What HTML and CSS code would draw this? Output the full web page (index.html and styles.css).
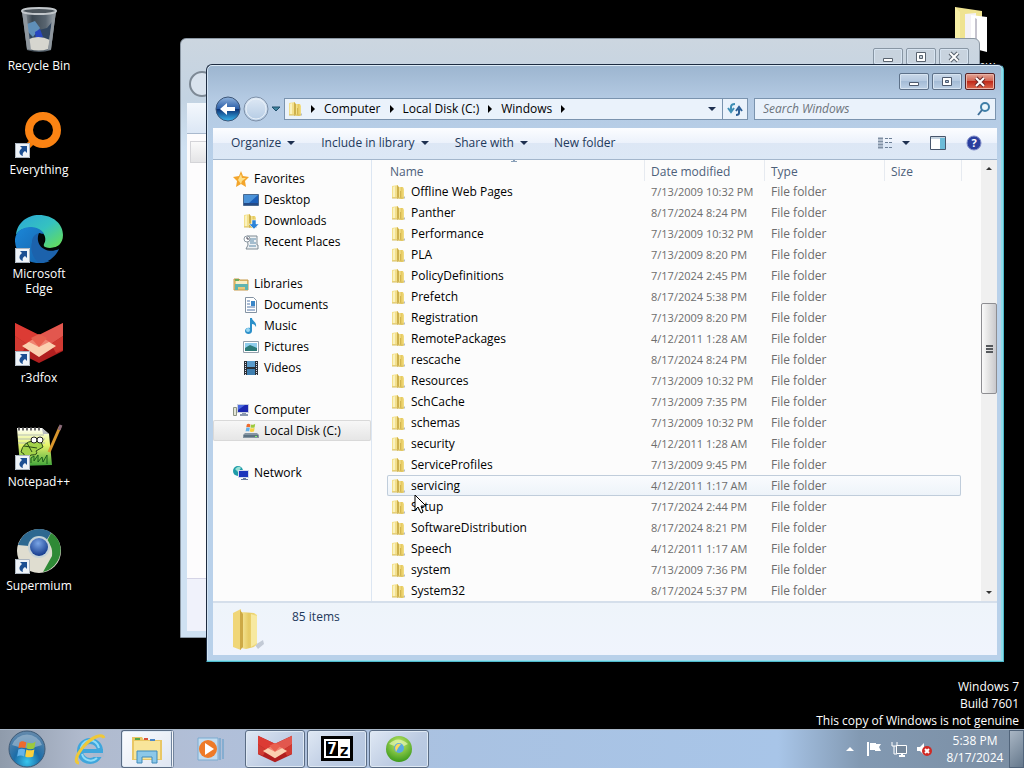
FILE: index.html
```html
<!DOCTYPE html>
<html lang="en">
<head>
  <meta charset="UTF-8">
  <meta name="viewport" content="width=device-width, initial-scale=1.0">
  <title>Desktop</title>
  <link rel="stylesheet" href="styles.css">
</head>
<body>
  <!-- shared icons and gradients -->
  <svg class="defs" aria-hidden="true">
    <defs>
      <linearGradient id="gFolder" x1="0" x2="1"><stop offset="0" stop-color="#f6e79a"/><stop offset=".5" stop-color="#e6ca62"/><stop offset="1" stop-color="#f3df86"/></linearGradient>
      <linearGradient id="gBack" x1="0" x2="0" y1="0" y2="1"><stop offset="0" stop-color="#8fb2dc"/><stop offset=".48" stop-color="#2c5fa8"/><stop offset=".52" stop-color="#0c3478"/><stop offset="1" stop-color="#38b6ee"/></linearGradient>
      <linearGradient id="gFwd" x1="0" x2="0" y1="0" y2="1"><stop offset="0" stop-color="#dfe9f5"/><stop offset="1" stop-color="#b4cbe4"/></linearGradient>
      <linearGradient id="gEdgeTop" x1="0" x2="1" y1="0" y2="1"><stop offset="0" stop-color="#2ba6d8"/><stop offset=".5" stop-color="#35c2c0"/><stop offset="1" stop-color="#6be04e"/></linearGradient>
      <linearGradient id="gEdgeLow" x1="0" x2="1" y1="0" y2="1"><stop offset="0" stop-color="#1b87d8"/><stop offset="1" stop-color="#1560a8"/></linearGradient>
      <linearGradient id="gBin" x1="0" x2="1"><stop offset="0" stop-color="#9aa3ab"/><stop offset=".3" stop-color="#3c4852"/><stop offset=".7" stop-color="#596570"/><stop offset="1" stop-color="#a5adb4"/></linearGradient>
      <radialGradient id="gOrb" cx=".5" cy=".85" r=".8"><stop offset="0" stop-color="#38c6ee"/><stop offset=".45" stop-color="#1c6da8"/><stop offset="1" stop-color="#5f87ab"/></radialGradient>
      <radialGradient id="gBall" cx=".45" cy=".3" r=".7"><stop offset="0" stop-color="#7aa5e6"/><stop offset="1" stop-color="#143a8c"/></radialGradient>
      <radialGradient id="gGreen" cx=".5" cy=".3" r=".7"><stop offset="0" stop-color="#c6ec6a"/><stop offset="1" stop-color="#3c9a1c"/></radialGradient>
      <linearGradient id="gNpp" x1="0" x2="0" y1="0" y2="1"><stop offset="0" stop-color="#fff"/><stop offset=".45" stop-color="#e6f36a"/><stop offset="1" stop-color="#3fa53a"/></linearGradient>
    </defs>
    <symbol id="folder" viewBox="0 0 16 16">
      <path d="M2 2l6-1v13l-6 0z" fill="#f3e08c"/>
      <path d="M7 1l2 2v11l-2 1z" fill="#cdb04c"/>
      <path d="M9 3h4l1 2v9l-1 1H9z" fill="url(#gFolder)"/>
      <path d="M10 7h1v7h-1z" fill="#d2b550"/>
      <path d="M3 3l2-1v11H3z" fill="#faf2bf"/>
      <path d="M2 14h12" stroke="#d8bf62" fill="none"/>
      <path d="M14 12l1 1v1l-1 1z" fill="#b4bcc8"/>
    </symbol>
    <symbol id="shortcut" viewBox="0 0 15 15">
      <path d="M0 0h15v15H0z" fill="#eef3f8"/><path d="M.5.5h14v14H.5z" fill="none" stroke="#aab4bf"/>
      <path d="M5 3h7v7l-2-2c-2 1-3 3-2 5-4-1-5-5-1-8z" fill="#1c4f92"/>
    </symbol>
    <symbol id="fox" viewBox="0 0 48 42">
      <path d="M0 1l24 12L48 1v28L24 41 0 29z" fill="#b11f1f"/>
      <path d="M0 1l24 12L12 22 0 14z" fill="#dc3b34"/><path d="M48 1L24 13l12 9 12-8z" fill="#e2574e"/>
      <path d="M24 13l12 8-12 8-12-8z" fill="#f08472"/>
      <path d="M0 14l12 8-5 9-7-3zM48 14l-12 8 5 9 7-3z" fill="#d13a32"/>
      <path d="M7 24l7-4 10 5 10-5 7 4-17 11z" fill="#fbd0b0"/>
      <path d="M16 16l8-4 8 4-8 9z" fill="#e8604f"/>
    </symbol>
    <symbol id="flag7" viewBox="0 0 20 20">
      <path d="M3 4c2-2 4-1 6 0L8 9C6 8 4 8 2 9z" fill="#ee6a2c"/>
      <path d="M10 4c2 1 5 1 7-1l-1 6c-2 1-5 1-7 0z" fill="#9cc93c"/>
      <path d="M2 10c2-1 4-1 6 0l-1 6c-2-1-4-1-6 0z" fill="#63b3ea"/>
      <path d="M9 10c2 1 4 1 7 0l-1 6c-3 1-5 1-7 0z" fill="#fbd03c"/>
    </symbol>
  </svg>

  <main class="desktop">
    <div class="desktop-icons">
      <a href="#" class="shortcut">
        <svg width="48" height="48" viewBox="0 0 48 48">
          <path d="M7 4h34l-5 39q-12 4-24 0z" fill="url(#gBin)"/>
          <path d="M11 22l6-5 7 6 8-2 5-6-3 18H13z" fill="#31465f"/><path d="M12 17l8-3 5 7-7 9-5-5z" fill="#5f8fb8"/>
          <path d="M20 25l5-3 3 8-7 3z" fill="#2746c0"/><path d="M12 33q11-6 23 0l-2 9q-9 3-19 0z" fill="#d6d6cf"/>
          <path d="M7 4h4l5 39-4-1zM41 4h-3l-5 39 3-1z" fill="#8f979e"/>
          <ellipse cx="24" cy="4" rx="17" ry="3" fill="#4c555c" stroke="#c2c7cb" stroke-width="2"/>
        </svg>
        <span>Recycle Bin</span>
      </a>
      <a href="#" class="shortcut">
        <svg width="48" height="48" viewBox="0 0 48 48">
          <path d="M19 29L10 38" stroke="#f57c0a" stroke-width="6"/>
          <circle cx="28" cy="19" r="14" fill="#000" stroke="#fb8313" stroke-width="8"/>
          <use href="#shortcut" y="32" width="15" height="15"/>
        </svg>
        <span>Everything</span>
      </a>
      <a href="#" class="shortcut">
        <svg width="48" height="48" viewBox="0 0 48 48">
          <path d="M1 20C2 8 12 0 24 0c14 0 24 9 24 20 0 9-6 13-13 13-6 0-7-2-6-4 4-6-1-15-11-16C10 12 4 15 1 20z" fill="url(#gEdgeTop)"/>
          <path d="M0 24c1-8 8-12 16-12 7 0 12 4 13 7-6-1-12 4-12 11 0 8 7 17 18 16-15 7-36-3-35-22z" fill="url(#gEdgeLow)"/>
          <path d="M17 27c0-5 3-8 7-9-2 12 7 19 20 16-4 9-12 14-20 14C17 42 15 34 17 27z" fill="#1c62ac"/>
          <path d="M24 18c4 0 6 4 5 8-2 4-1 7 6 7 4 0 8-1 10-3l-1 4c-13 6-25-4-20-16z" fill="#020608"/>
          <use href="#shortcut" y="33" width="15" height="15"/>
        </svg>
        <span>Microsoft Edge</span>
      </a>
      <a href="#" class="shortcut">
        <svg width="48" height="48" viewBox="0 0 48 48">
          <use href="#fox" y="3" width="48" height="42"/>
          <use href="#shortcut" y="32" width="15" height="15"/>
        </svg>
        <span>r3dfox</span>
      </a>
      <a href="#" class="shortcut">
        <svg width="48" height="48" viewBox="0 0 48 48">
          <path d="M2 5h25l7 6 3 31-32 1z" fill="url(#gNpp)"/>
          <path d="M3 6h23" stroke="#666" stroke-width="3" stroke-dasharray="2 2"/>
          <path d="M3 12h26M3 16h27M3 20h27" stroke="#b5bdb5"/>
          <path d="M27 5l7 6h-6z" fill="#b8bbc0"/>
          <path d="M6 29q2-10 12-11l5-3 3 4 2 5-7 4q3 4-5 4l-4 3q-4-1-3-4zM9 23l13 2M12 20l5 9" fill="#a3d24a" stroke="#2b4a18" stroke-width="1"/>
          <circle cx="19" cy="17" r="3" fill="#fff" stroke="#222"/><circle cx="25" cy="17" r="3" fill="#fff" stroke="#222"/>
          <path d="M16 40v-5l3-2v5l4-6v7l4-5 1 5 4-7v9" stroke="#1c5f1c" fill="none"/>
          <path d="M45 4L34 29" stroke="#d9962c" stroke-width="3"/><path d="M46 2l-2 5" stroke="#8b6b7a" stroke-width="3"/>
          <use href="#shortcut" y="32" width="15" height="15"/>
        </svg>
        <span>Notepad++</span>
      </a>
      <a href="#" class="shortcut">
        <svg width="48" height="48" viewBox="0 0 48 48">
          <circle cx="24" cy="24" r="22" fill="#dfddd0"/>
          <path d="M3 18C7 7 15 2 24 2c5 0 9 1 12 4l-5 8c-8-4-15-1-17 5z" fill="#2d6890"/>
          <path d="M36 6c8 5 11 13 9 22-2 8-8 15-17 17l9-16c1-8-2-12-5-15z" fill="#2f8a36"/>
          <circle cx="24" cy="20" r="11" fill="#c5d3d8"/><circle cx="24" cy="20" r="9" fill="url(#gBall)"/>
          <use href="#shortcut" y="32" width="15" height="15"/>
        </svg>
        <span>Supermium</span>
      </a>
    </div>

    <a href="#" class="shortcut right-icon">
      <svg width="48" height="48" viewBox="0 0 48 48">
        <path d="M8 0l27 4v34L8 36z" fill="#efe391"/><path d="M8 0l5 5v32l-5-1z" fill="#f8f0a6"/>
        <path d="M18 7l11-1v34H18z" fill="#f3f1f6"/><path d="M24 8l16 2v35l-16-4z" fill="#fff"/><path d="M28 11l2 1v31l-2-1z" fill="#c5c3ce"/>
      </svg>
      <span>New</span>
    </a>

    <!-- window behind -->
    <section class="window window-back" aria-label="Background window">
      <div class="caption">
        <button aria-label="Minimize"><svg width="12" height="12"><path d="M1.500 7.500h9v3h-9z" fill="#fff" stroke="#59636f"/></svg></button>
        <button aria-label="Maximize"><svg width="12" height="12"><path d="M1.500 1.500h9v9h-9z" fill="#fff" stroke="#59636f"/><path d="M4.500 4.500h3v3h-3z" fill="#c2ccd6" stroke="#59636f"/></svg></button>
        <button aria-label="Close"><svg width="12" height="12"><path d="M2 2l8 8M10 2l-8 8" stroke="#59636f" stroke-width="4"/><path d="M2 2l8 8M10 2l-8 8" stroke="#fff" stroke-width="2"/></svg></button>
      </div>
      <div class="back-nav"><span></span></div>
      <div class="back-toolbar"></div>
      <div class="back-content"><span></span></div>
      <div class="back-details"></div>
    </section>

    <!-- explorer -->
    <section class="window window-front" aria-label="Windows">
      <div class="caption">
        <button aria-label="Minimize"><svg width="12" height="12"><path d="M1.500 6.500h9v3h-9z" fill="#fff" stroke="#4d5a6e"/></svg></button>
        <button aria-label="Maximize"><svg width="12" height="12"><path d="M1.500 1.500h9v8h-9z" fill="#fff" stroke="#4d5a6e"/><path d="M4.500 4.500h3v2h-3z" fill="#a8bfd8" stroke="#4d5a6e"/></svg></button>
        <button class="close" aria-label="Close"><svg width="12" height="12"><path d="M2 2l8 8M10 2l-8 8" stroke="#6b2a2a" stroke-width="4"/><path d="M2 2l8 8M10 2l-8 8" stroke="#fff" stroke-width="2"/></svg></button>
      </div>

      <div class="address-row">
        <div class="nav-buttons">
          <button aria-label="Back"><svg width="26" height="26"><circle cx="13" cy="13" r="12" fill="url(#gBack)" stroke="#3d5678"/><path d="M5 13l7-6v4h8v4h-8v4z" fill="#fff"/></svg></button>
          <button aria-label="Forward"><svg width="26" height="26"><circle cx="13" cy="13" r="12" fill="url(#gFwd)" stroke="#7d90a8"/><circle cx="13" cy="13" r="10" fill="none" stroke="#e8f0f8"/></svg></button>
          <button aria-label="Recent pages"><svg width="10" height="6"><path d="M1 1h8L5 5z" fill="#3f86a0" stroke="#1f4f6c"/></svg></button>
        </div>
        <nav class="breadcrumb" aria-label="Address">
          <svg width="16" height="18"><use href="#folder" width="16" height="18"/></svg>
          <i class="arrow"></i><a href="#">Computer</a>
          <i class="arrow"></i><a href="#">Local Disk (C:)</a>
          <i class="arrow"></i><a href="#">Windows</a>
          <i class="arrow"></i>
          <button class="history" aria-label="Previous locations"><i class="caret"></i></button>
          <button class="refresh" aria-label="Refresh"><svg width="16" height="16"><path d="M4 10V6q0-3 4-3M1 7l3 4 3-4" fill="none" stroke="#3f8fb5" stroke-width="2"/><path d="M12 8v4q0 2-3 2M9 10l3-4 3 4" fill="none" stroke="#2d5f96" stroke-width="2"/></svg></button>
        </nav>
        <div class="search">
          <input type="text" id="search" placeholder="Search Windows" aria-label="Search Windows">
          <svg width="14" height="14"><circle cx="8" cy="5" r="4" fill="#eaf6fc" stroke="#3f7fa8" stroke-width="2"/><path d="M5 8l-4 5" stroke="#3f6f98" stroke-width="2"/></svg>
        </div>
      </div>

      <div class="client">
        <div class="toolbar">
          <button>Organize<i class="caret"></i></button>
          <button>Include in library<i class="caret"></i></button>
          <button>Share with<i class="caret"></i></button>
          <button>New folder</button>
          <div class="toolbar-right">
            <button aria-label="Change your view"><svg width="16" height="14"><path d="M1 2.500h5M1 5.500h5M1 8.500h5M1 11.500h5" stroke="#8090a4" stroke-width="2"/><path d="M8 2.500h3M12 2.500h3M8 6.500h3M12 6.500h3M8 11.500h3M12 11.500h3" stroke="#6c7f96"/></svg><i class="caret"></i></button>
            <button aria-label="Preview pane"><svg width="16" height="14"><path d="M.5.500h15v13H.5z" fill="#fff" stroke="#47566c"/><path d="M1 1h14v2H1z" fill="#c5d3e0"/><path d="M10 2h5v11h-5z" fill="#6bbbd8"/></svg></button>
            <button aria-label="Help"><svg width="16" height="16"><circle cx="8" cy="8" r="7" fill="#2a3e9e" stroke="#7f8cc8" stroke-width="1"/><text x="8" y="12" text-anchor="middle" class="help-mark">?</text></svg></button>
          </div>
        </div>

        <div class="panes">
          <nav class="sidebar" aria-label="Folders">
            <ul>
              <li><a href="#"><svg viewBox="0 0 16 16"><path d="M8 0l2 5 6 1-4 4 1 6-5-3-5 3 1-6-4-4 6-1z" fill="#f3a52c"/><path d="M8 3l1 4 4 0-4 3-1 3-3-4z" fill="#fde08a"/></svg>Favorites</a>
                <ul>
                  <li><a href="#"><svg viewBox="0 0 16 16"><path d="M.5 2.500h15v11H.5z" fill="#1c5fb8" stroke="#4a6a90"/><path d="M1 3h14L6 11H1z" fill="#4c93d8"/><path d="M1 11h14v2H1z" fill="#244a86"/></svg>Desktop</a></li>
                  <li><a href="#"><svg viewBox="0 0 16 16"><use href="#folder" x="-1" width="16" height="16"/><path d="M9 7h4v4h3l-5 5-5-5h3z" fill="#2c83d8" stroke="#fff" stroke-width=".5"/></svg>Downloads</a></li>
                  <li><a href="#"><svg viewBox="0 0 16 16"><path d="M4 2h10v9h1v4H3l2-4z" fill="#eef1f3" stroke="#7e8b94"/><path d="M7 5h6M7 7h4M7 9h6M6 12h7" stroke="#5b88a8"/><circle cx="4" cy="5" r="3" fill="#fff" stroke="#8d99a3"/><path d="M4 3v2h2" fill="none" stroke="#445"/></svg>Recent Places</a></li>
                </ul>
              </li>
              <li><a href="#"><svg viewBox="0 0 16 16"><path d="M1 3h5l1 1h8v10H1z" fill="#e8c97a" stroke="#c69a4a"/><path d="M3 5h11v3H3z" fill="#f9efc6"/><path d="M2 8h13v6h-3v-3H5v3H2z" fill="#5fb4b0"/><path d="M2 3h4v2H2z" fill="#6cab5c"/></svg>Libraries</a>
                <ul>
                  <li><a href="#"><svg viewBox="0 0 16 16"><path d="M2.500.500h8l3 3v12h-11z" fill="#fff" stroke="#8493a3"/><path d="M4 4h3M4 7h3M4 10h8M4 13h8" stroke="#5277a8"/><path d="M8 4h4v5H8z" fill="#3a86c8"/></svg>Documents</a></li>
                  <li><a href="#"><svg viewBox="0 0 16 16"><path d="M7 0h2c0 3 5 4 4 9-1-2-2-3-4-3v7c0 4-7 4-7 0 0-3 3-4 5-3z" fill="#2b8fc9"/><circle cx="5" cy="12" r="2" fill="#9ad8f4"/></svg>Music</a></li>
                  <li><a href="#"><svg viewBox="0 0 16 16"><path d="M.5 2.500h15v11H.5z" fill="#fff" stroke="#93a0ac"/><path d="M2 4h12v8H2z" fill="#8fcdec"/><path d="M2 9l5-3 7 3v3H2z" fill="#2c7b78"/></svg>Pictures</a></li>
                  <li><a href="#"><svg viewBox="0 0 16 16"><path d="M1 1h14v14H1z" fill="#2b3036"/><path d="M4 1h8v6H4z" fill="#5b9ccc"/><path d="M4 9h8v6H4z" fill="#3f7fb0"/><path d="M2.500 2v13M13.500 2v13" stroke="#dde" stroke-dasharray="1 1"/></svg>Videos</a></li>
                </ul>
              </li>
              <li><a href="#"><svg viewBox="0 0 16 16"><path d="M4 2h12v9H4z" fill="#c8cfe0"/><path d="M5 3h10v7H5z" fill="#1c28b0"/><path d="M5 3h7L5 8z" fill="#4b6ae0"/><path d="M9 11h4v1H9zM7 12h8v2H7z" fill="#8a98ae"/><path d="M.5 5.500h3v8h-3z" fill="#e4e6d8" stroke="#8e9484"/></svg>Computer</a>
                <ul>
                  <li class="selected"><a href="#"><svg viewBox="0 0 16 16"><path d="M2 10h12l2 2v3H0v-3z" fill="#8595a2"/><path d="M1 12h14v2H1z" fill="#5c7282"/><path d="M12 13h2v1h-2z" fill="#7ff06c"/><use href="#flag7" x="2" y="-1" width="12" height="12"/></svg>Local Disk (C:)</a></li>
                </ul>
              </li>
              <li><a href="#"><svg viewBox="0 0 16 16"><circle cx="5" cy="6" r="5" fill="#1f9ca8"/><path d="M2 4q4-4 6-1L5 7z" fill="#98e0d4"/><path d="M5 5h11v8H5z" fill="#d3dcec"/><path d="M6 6h9v6H6z" fill="#1c36bc"/><path d="M10 13h3v1h-3zM8 14h7v1H8z" fill="#667a9a"/></svg>Network</a></li>
            </ul>
          </nav>

          <div class="files">
            <table>
              <colgroup><col class="col-name"><col class="col-date"><col class="col-type"><col class="col-size"></colgroup>
              <thead>
                <tr><th>Name</th><th>Date modified</th><th>Type</th><th>Size</th></tr>
              </thead>
              <tbody>
                <tr><td><svg><use href="#folder"/></svg>Offline Web Pages</td><td>7/13/2009 10:32 PM</td><td>File folder</td><td></td></tr>
                <tr><td><svg><use href="#folder"/></svg>Panther</td><td>8/17/2024 8:24 PM</td><td>File folder</td><td></td></tr>
                <tr><td><svg><use href="#folder"/></svg>Performance</td><td>7/13/2009 10:32 PM</td><td>File folder</td><td></td></tr>
                <tr><td><svg><use href="#folder"/></svg>PLA</td><td>7/13/2009 8:20 PM</td><td>File folder</td><td></td></tr>
                <tr><td><svg><use href="#folder"/></svg>PolicyDefinitions</td><td>7/17/2024 2:45 PM</td><td>File folder</td><td></td></tr>
                <tr><td><svg><use href="#folder"/></svg>Prefetch</td><td>8/17/2024 5:38 PM</td><td>File folder</td><td></td></tr>
                <tr><td><svg><use href="#folder"/></svg>Registration</td><td>7/13/2009 8:20 PM</td><td>File folder</td><td></td></tr>
                <tr><td><svg><use href="#folder"/></svg>RemotePackages</td><td>4/12/2011 1:28 AM</td><td>File folder</td><td></td></tr>
                <tr><td><svg><use href="#folder"/></svg>rescache</td><td>8/17/2024 8:24 PM</td><td>File folder</td><td></td></tr>
                <tr><td><svg><use href="#folder"/></svg>Resources</td><td>7/13/2009 10:32 PM</td><td>File folder</td><td></td></tr>
                <tr><td><svg><use href="#folder"/></svg>SchCache</td><td>7/13/2009 7:35 PM</td><td>File folder</td><td></td></tr>
                <tr><td><svg><use href="#folder"/></svg>schemas</td><td>7/13/2009 10:32 PM</td><td>File folder</td><td></td></tr>
                <tr><td><svg><use href="#folder"/></svg>security</td><td>4/12/2011 1:28 AM</td><td>File folder</td><td></td></tr>
                <tr><td><svg><use href="#folder"/></svg>ServiceProfiles</td><td>7/13/2009 9:45 PM</td><td>File folder</td><td></td></tr>
                <tr class="hover"><td><svg><use href="#folder"/></svg>servicing</td><td>4/12/2011 1:17 AM</td><td>File folder</td><td></td></tr>
                <tr><td><svg><use href="#folder"/></svg>Setup</td><td>7/17/2024 2:44 PM</td><td>File folder</td><td></td></tr>
                <tr><td><svg><use href="#folder"/></svg>SoftwareDistribution</td><td>8/17/2024 8:21 PM</td><td>File folder</td><td></td></tr>
                <tr><td><svg><use href="#folder"/></svg>Speech</td><td>4/12/2011 1:17 AM</td><td>File folder</td><td></td></tr>
                <tr><td><svg><use href="#folder"/></svg>system</td><td>7/13/2009 7:36 PM</td><td>File folder</td><td></td></tr>
                <tr><td><svg><use href="#folder"/></svg>System32</td><td>8/17/2024 5:37 PM</td><td>File folder</td><td></td></tr>
              </tbody>
            </table>
          </div>

          <div class="scrollbar">
            <button aria-label="Scroll up"><i class="caret up"></i></button>
            <div class="track"><div class="thumb"><i></i><i></i><i></i></div></div>
            <button aria-label="Scroll down"><i class="caret"></i></button>
          </div>
        </div>

        <div class="details">
          <svg width="42" height="44" viewBox="0 0 42 44"><path d="M26 36l8-5 1 4-6 5z" fill="#c3cad6"/><path d="M4 4l8-4v41l-8-3z" fill="#f0d678"/><path d="M12 3l13 1 3 2v29l-3 3-8 2-5-1z" fill="url(#gFolder)"/><path d="M11 1l3 4v33l-3 3z" fill="#cda945"/><path d="M22 5l6 2v27l-6 4z" fill="#f7e9a0"/></svg>
          <span>85 items</span>
        </div>
      </div>
    </section>

    <svg class="cursor" width="13" height="20" viewBox="0 0 13 20"><path d="M1 1v15l3-3 3 6 2-1-2-6h5z" fill="#fff" stroke="#000"/></svg>

    <div class="watermark">
      <p>Windows 7</p>
      <p>Build 7601</p>
      <p>This copy of Windows is not genuine</p>
    </div>
  </main>

  <footer class="taskbar">
    <button class="start" aria-label="Start"><svg width="38" height="38"><circle cx="19" cy="19" r="18" fill="url(#gOrb)" stroke="#3e5a76"/><path d="M4 15a16 16 0 0 1 30 0q-15 6-30 0z" fill="#a9c0d4" opacity=".6"/><use href="#flag7" x="8" y="8" width="23" height="23"/></svg></button>
    <button class="task pinned" aria-label="Internet Explorer"><svg width="34" height="34"><circle cx="17" cy="19" r="10" fill="none" stroke="#3fa6dc" stroke-width="6"/><path d="M20 21h11v4H20z" fill="#abb9cf"/><path d="M9 17h21v4H9z" fill="#3fa6dc"/><path d="M8 19a9 9 0 0 1 18-3M9 22a9 9 0 0 0 15 4" fill="none" stroke="#8fdcf8" stroke-width="2"/><path d="M31 6c-2-5-12-1-20 8S1 31 6 31" fill="none" stroke="#efc83a" stroke-width="3"/></svg></button>
    <button class="task active stacked" aria-label="Windows Explorer"><svg width="34" height="34"><path d="M2 5h10l2 3h18v20H2z" fill="#e9c765"/><path d="M4 9h26v18H4z" fill="#f8e59a"/><path d="M5 6h5v2H5z" fill="#58a848"/><path d="M14 6h4v2h-4z" fill="#d8503c"/><path d="M20 7h5v2h-5z" fill="#4c88c8"/><path d="M7 19h20v12h-5v-6H12v6H7z" fill="#8cc8e8" stroke="#3f8bbc"/></svg></button>
    <button class="task stacked media" aria-label="Media Player"><svg width="30" height="30"><path d="M3 4h20v22H3z" fill="#c3dcf0" stroke="#7aabd0"/><path d="M25 4v22M28 5v20" stroke="#5a9bc8" stroke-width="1"/><circle cx="13" cy="15" r="9" fill="#ee7a28"/><path d="M10 9l9 6-9 6z" fill="#fff"/></svg></button>
    <button class="task open" aria-label="r3dfox"><svg width="34" height="28" viewBox="0 0 48 42" preserveAspectRatio="none"><use href="#fox" width="48" height="42"/></svg></button>
    <button class="task open" aria-label="7-Zip"><svg width="32" height="26"><path d="M1.500 1.500h29v22h-29z" fill="#fff" stroke="#000" stroke-width="3"/><path d="M5 5h12v15H5z"/><text x="11" y="18" text-anchor="middle" class="seven">7</text><text x="23" y="20" text-anchor="middle" class="zed">z</text></svg></button>
    <button class="task open" aria-label="Supermium installer"><svg width="28" height="28"><circle cx="14" cy="14" r="13" fill="url(#gGreen)"/><path d="M4 9q9-9 19 0l-8 4z" fill="#e6f5b4" opacity=".7"/><circle cx="14" cy="13" r="5" fill="#5aa9e0"/><path d="M10 13q1-5 6-4l-3 4-2 4z" fill="#fbd75a"/></svg></button>

    <div class="tray">
      <button aria-label="Show hidden icons"><i class="caret up"></i></button>
      <svg width="16" height="16"><path d="M2 1v14" stroke="#fff" stroke-width="2"/><path d="M4 2h6v1h5l-2 3 2 4H9V9H4z" fill="#fff"/></svg>
      <svg width="16" height="16"><path d="M5.500 4.500h10v8h-10z" fill="#75879a" stroke="#fff" stroke-width="1"/><path d="M8 15h6M11 12v3" stroke="#fff" stroke-width="2"/><path d="M1 1v4h5V1M3 5v8h3" fill="none" stroke="#fff" stroke-width="1"/></svg>
      <svg width="16" height="16"><path d="M1 6h3l4-4v12l-4-4H1z" fill="#fff"/><circle cx="11" cy="10" r="5" fill="#d02a24"/><path d="M9 8l4 4M13 8l-4 4" stroke="#fff" stroke-width="2"/></svg>
      <div class="clock"><time>5:38 PM</time><time>8/17/2024</time></div>
      <button class="show-desktop" aria-label="Show desktop"></button>
    </div>
  </footer>
</body>
</html>
```
FILE: styles.css
```css
* {
  box-sizing: border-box;
}

body {
  margin: 0;
  min-height: 100vh;
  display: flex;
  flex-direction: column;
  background: #000;
  font-family: "Open Sans", "Noto Sans", sans-serif;
  font-size: 12px;
  line-height: 16px;
  color: #000;
}

button {
  border: 0;
  padding: 0;
  background: none;
  font: inherit;
  color: inherit;
  display: flex;
  align-items: center;
  justify-content: center;
}

a {
  color: inherit;
  text-decoration: none;
}

svg {
  display: block;
  flex: none;
}

ul {
  list-style: none;
  margin: 0;
  padding: 0;
}

.defs {
  position: absolute;
  width: 0;
  height: 0;
}

.caret {
  border: 4px solid transparent;
  border-top-color: #1e3050;
  border-bottom: 0;
}

.caret.up {
  border-top: 0;
  border-bottom: 4px solid #444;
}

/* Desktop */
.desktop {
  position: relative;
  flex: 1;
  min-height: 700px;
}

.desktop-icons {
  display: grid;
  grid-auto-rows: 104px;
  width: 78px;
}

.shortcut {
  display: flex;
  flex-direction: column;
  align-items: center;
  gap: 3px;
  padding: 7px 4px 0;
  color: #fff;
  text-align: center;
  line-height: 15px;
}

.right-icon {
  position: absolute;
  top: 0;
  right: 25px;
  align-items: flex-end;
}

.watermark {
  position: absolute;
  right: 5px;
  bottom: 0;
  color: #fff;
  text-align: right;
  line-height: 17px;
}

.watermark p {
  margin: 0;
}

.cursor {
  position: absolute;
  left: 414px;
  top: 494px;
}

/* Windows */
.window {
  position: absolute;
  border: 1px solid #1d2b40;
  border-radius: 6px 6px 0 0;
}

.caption {
  display: flex;
  justify-content: flex-end;
  gap: 3px;
}

.caption button {
  width: 30px;
  height: 17px;
  border: 1px solid #5d7189;
  border-radius: 2px;
  background: linear-gradient(#c9d8e9, #b4c8df 50%, #a4bcd6 50%, #bdd0e5);
  box-shadow: inset 0 0 0 1px #d7e4f1;
}

.caption .close {
  background: linear-gradient(#e3a596, #d0604e 50%, #c02a1a 50%, #dc6a50);
  border-color: #5a2326;
  box-shadow: inset 0 0 0 1px #eab3a6;
}

.window-back {
  display: flex;
  flex-direction: column;
  left: 180px;
  right: 44px;
  top: 38px;
  height: 600px;
  padding: 0 6px 6px;
  background: linear-gradient(#ccd6e0, #c3d3e2 60px, #cfe1f2 110px, #cfe1f2);
  border-color: #8b97a3;
}

.window-back .caption {
  padding: 9px 4px 0;
}

.window-back .caption button {
  background: #c8d3de;
  border-color: #8896a4;
}

.back-nav {
  height: 38px;
}

.back-nav span {
  display: block;
  width: 26px;
  height: 26px;
  margin: 6px 0 0 2px;
  border: 2px solid #7d8995;
  border-radius: 50%;
  background: #d9e3ee;
}

.back-toolbar {
  height: 31px;
  background: linear-gradient(#f4f8fd, #dce7f5);
  border-bottom: 1px solid #a9b9cd;
}

.back-content {
  flex: 1;
  padding: 7px 3px;
  background: #fdfcfd;
}

.back-content span {
  display: block;
  height: 22px;
  border: 1px solid #d4d4d8;
  background: linear-gradient(#fafafa, #e4e4e6);
}

.back-details {
  height: 53px;
  background: #f0f2fb;
  border-top: 1px solid #d5d4e6;
}

.window-front {
  left: 206px;
  right: 20px;
  top: 64px;
  padding: 0 6px 6px;
  background: linear-gradient(#9cb5cf, #b4cae3 34px, #b9d1ea 100px, #b9d1ea);
  box-shadow: inset 0 1px 0 #dcebf6, inset -2px -1px 0 #8fdcea, inset 1px 0 0 #d3e4f3;
  border-right-color: #4fb9cc;
  border-bottom-color: #4fb9cc;
}

.window-front .caption {
  padding: 8px 2px 8px 0;
}

.address-row {
  display: flex;
  align-items: center;
  gap: 6px;
  height: 22px;
  margin: 0 1px 8px 2px;
}

.nav-buttons {
  display: flex;
  align-items: center;
  gap: 2px;
  margin-right: -3px;
}

.breadcrumb,
.search {
  display: flex;
  align-items: center;
  height: 22px;
  border: 1px solid #7a93ae;
  background: #eaf2fb;
}

.breadcrumb {
  flex: 1;
  padding-left: 2px;
}

.breadcrumb a {
  margin-right: 9px;
}

.arrow {
  border: 4px solid transparent;
  border-left-color: #000;
  border-right: 0;
  margin-right: 9px;
}

.breadcrumb svg + .arrow {
  margin-left: 8px;
}

.breadcrumb .history {
  width: 20px;
  height: 20px;
  margin-left: auto;
}

.refresh {
  width: 25px;
  height: 20px;
  border-left: 1px solid #7a93ae;
}

.search {
  flex: 0 0 31%;
  padding: 0 4px 0 8px;
}

.search input {
  flex: 1;
  min-width: 0;
  padding: 0;
  border: 0;
  outline: 0;
  background: none;
  font: inherit;
}

.search input::placeholder {
  color: #6d747c;
  font-style: italic;
  opacity: 1;
}

.client {
  background: #fcfcfc;
}

.toolbar {
  display: flex;
  align-items: center;
  gap: 26px;
  height: 32px;
  padding: 0 15px 2px 18px;
  background: linear-gradient(#fcfdff, #ebf1fb 50%, #dde7f5 50%, #dce8f6);
  border-bottom: 1px solid #a3b6cc;
  color: #1e395b;
}

.toolbar button {
  gap: 6px;
}

.toolbar-right {
  display: flex;
  align-items: center;
  gap: 20px;
  margin-left: auto;
}

.toolbar-right button:first-child {
  gap: 9px;
}

.help-mark {
  fill: #fff;
  font-size: 11px;
  font-weight: bold;
}

.panes {
  display: flex;
}

.sidebar {
  width: 159px;
  padding-top: 8px;
  border-right: 1px solid #dce6f2;
}

.sidebar a {
  display: flex;
  align-items: center;
  gap: 5px;
  height: 21px;
  padding-left: 20px;
}

.sidebar ul ul a {
  padding-left: 30px;
}

.sidebar > ul > li {
  margin-bottom: 21px;
}

.sidebar svg {
  width: 16px;
  height: 16px;
}

.sidebar .selected {
  background: linear-gradient(#f8f8f8, #e5e5e5);
  box-shadow: inset 0 0 0 1px #d9d9d9;
  border-radius: 2px;
}

/* File list */
.files {
  flex: 1;
  padding-left: 15px;
  overflow: hidden;
}

table {
  table-layout: fixed;
  width: 574px;
  border-collapse: separate;
  border-spacing: 0;
}

.col-name {
  width: 257px;
}

.col-date,
.col-type {
  width: 120px;
}

.col-size {
  width: 77px;
}

th,
td {
  height: 21px;
  padding: 0 0 0 7px;
  text-align: left;
  font-weight: normal;
  white-space: nowrap;
  color: #6d6d6d;
}

th {
  padding-top: 2px;
  color: #4c607a;
  box-shadow: 1px 0 0 #e6eaf0;
}

th:first-child,
td:first-child {
  padding-left: 3px;
}

th:first-child {
  background: linear-gradient(#8aa0b8, #8aa0b8) 126px 0 / 2px 1px no-repeat, linear-gradient(#8aa0b8, #8aa0b8) 124px 1px / 6px 1px no-repeat;
}

td:first-child {
  color: #000;
}

/* dates */
td:nth-child(2) {
  font-size: 11px;
}

td svg {
  float: left;
  width: 16px;
  height: 16px;
  margin-right: 5px;
}

.hover {
  background: linear-gradient(#fafcfe, #edf3f9);
  border-radius: 2px;
  box-shadow: inset 0 0 0 1px #c0cddb;
}

.scrollbar {
  display: flex;
  flex-direction: column;
  width: 16px;
  background: #f0f0f0;
}

.scrollbar button {
  height: 17px;
}

.scrollbar .caret {
  border-width: 3px;
  border-top-color: #333;
  border-bottom-width: 0;
}

.scrollbar .caret.up {
  border-top-width: 0;
  border-bottom: 3px solid #333;
}

.track {
  display: grid;
  flex: 1;
  grid-template-rows: 126fr 92fr 190fr;
}

.thumb {
  grid-row: 2;
  display: flex;
  flex-direction: column;
  align-items: center;
  justify-content: center;
  gap: 1px;
  border: 1px solid #8e8e92;
  border-radius: 2px;
  background: linear-gradient(90deg, #fafafa, #e2e2e2 50%, #c8c8cc);
}

.thumb i {
  width: 7px;
  height: 2px;
  background: #55585c;
}

.details {
  display: flex;
  height: 54px;
  padding: 6px 16px 4px;
  gap: 21px;
  background: linear-gradient(#eef4fa, #f0f4fd);
  border-top: 2px solid #d5dfeb;
  color: #1e395b;
}

/* Taskbar */
.taskbar {
  display: flex;
  align-items: stretch;
  height: 39px;
  border-top: 1px solid #a9b8c8;
  background: linear-gradient(90deg, #8f9bab, #b0bacd 8%, #b1bfd8 20%, #a9c2e2 45%, #a8c5e8 76%, #8299b2 84%, #7b8ea3);
}

.start {
  width: 54px;
  margin-right: 6px;
}

.task {
  width: 60px;
  margin-right: 2px;
  border-radius: 3px;
}

.task.pinned {
  width: 59px;
}

.task.active,
.task.open {
  border: 1px solid #5a6c84;
  background: linear-gradient(135deg, #dfe8f4, #bccbe2 60%, #b3c6e0);
  box-shadow: inset 0 0 0 1px #dfe9f4;
}

.task.active {
  width: 53px;
  background: linear-gradient(135deg, #fbfcfe, #dfe6f2);
}

.task.stacked {
  border-right: 3px double #71849d;
}

.task.media {
  width: 67px;
  border-right: 0;
}

.seven {
  fill: #fff;
  font: bold 16px "DejaVu Sans Mono", monospace;
}

.zed {
  font: bold 16px "DejaVu Sans Mono", monospace;
}

.tray {
  display: flex;
  align-items: center;
  gap: 9px;
  margin-left: auto;
  color: #fff;
}

.tray .caret.up {
  border-bottom-color: #fff;
  margin-right: 3px;
}

.clock {
  display: flex;
  flex-direction: column;
  align-items: center;
  width: 68px;
  margin-right: -9px;
  line-height: 17px;
}

.show-desktop {
  width: 15px;
  height: 38px;
  border: 1px solid #51647a;
  background: linear-gradient(135deg, #a9b6c4, #65788c);
}
```
